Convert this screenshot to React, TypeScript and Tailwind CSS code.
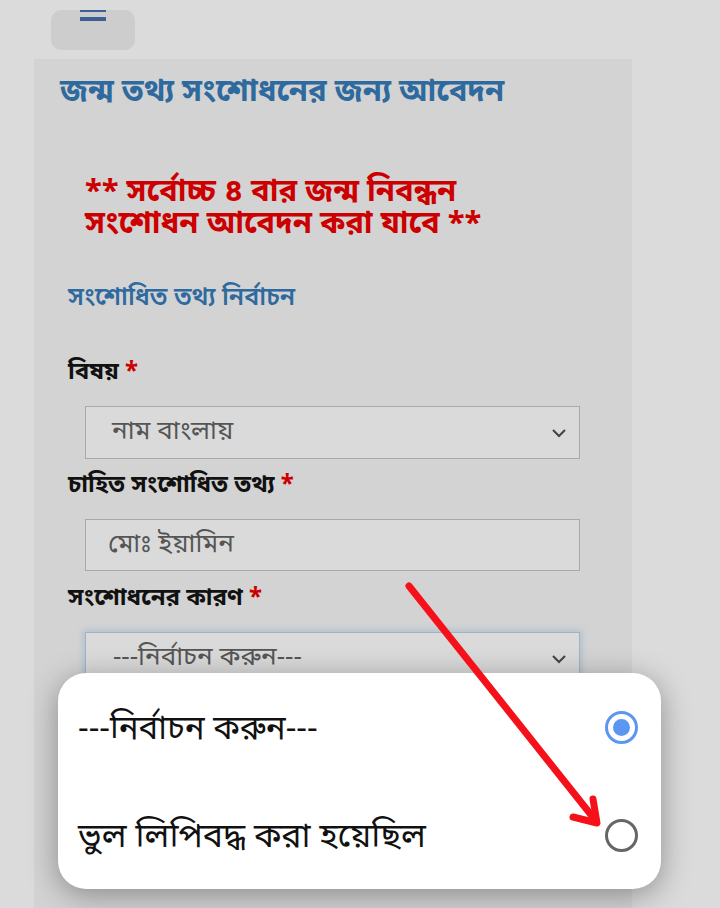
import React from "react";

const bn = { fontFamily: '"Noto Sans Bengali", "Noto Sans", "Liberation Sans", sans-serif' };

function Chevron() {
  return (
    <svg width="16" height="10" viewBox="0 0 16 10" className="shrink-0">
      <path d="M2 2l6 6 6-6" fill="none" stroke="#444" strokeWidth="2" />
    </svg>
  );
}

function Label({ text }: { text: string }) {
  return (
    <div className="text-[24px] leading-[28px] font-bold text-[#111] whitespace-nowrap">
      {text} <span className="text-[#cc0000]">*</span>
    </div>
  );
}

export default function App() {
  return (
    <div className="relative w-[720px] h-[908px] overflow-hidden bg-[#dbdbdb]" style={bn}>
      <div className="ml-[51px] mt-[10px] w-[84px] h-[40px] rounded-[10px] bg-[#cdcdcd] relative">
        <div className="absolute left-[29px] top-0 w-[26px] h-[2px] bg-[#3d5f96]" />
        <div className="absolute left-[29px] top-[7px] w-[26px] h-[4px] bg-[#3d5f96]" />
      </div>

      <div className="ml-[34px] mt-[9px] w-[598px] h-[849px] bg-[#d3d3d3]">
        <div className="pl-[26px] pt-[19px] text-[31px] leading-[32px] font-bold text-[#2e6a9e] whitespace-nowrap">
          জন্ম তথ্য সংশোধনের জন্য আবেদন
        </div>
        <div className="pl-[51px] mt-[68px] text-[31px] leading-[32px] font-bold text-[#cc0000] whitespace-nowrap">
          ** সর্বোচ্চ ৪ বার জন্ম নিবন্ধন
          <br />
          সংশোধন আবেদন করা যাবে **
        </div>
        <div className="pl-[34px] mt-[43px] text-[25px] leading-[28px] font-semibold text-[#2e6a9e] whitespace-nowrap">
          সংশোধিত তথ্য নির্বাচন
        </div>

        <div className="pl-[34px] mt-[46px]">
          <Label text="বিষয়" />
        </div>
        <div className="ml-[51px] mt-[19px] w-[495px] h-[53px] border border-[#a9a9a9] bg-[#dadada] flex items-center justify-between pl-[26px] pr-[12px] text-[26px] text-[#555]">
          <span>নাম বাংলায়</span>
          <Chevron />
        </div>

        <div className="pl-[34px] mt-[13px]">
          <Label text="চাহিত সংশোধিত তথ্য" />
        </div>
        <div className="ml-[51px] mt-[19px] w-[495px] h-[52px] border border-[#a9a9a9] bg-[#dadada] flex items-center pl-[22px] text-[26px] text-[#555]">
          মোঃ ইয়ামিন
        </div>

        <div className="pl-[34px] mt-[14px]">
          <Label text="সংশোধনের কারণ" />
        </div>
        <div className="ml-[51px] mt-[19px] w-[495px] h-[53px] border border-[#9fb4c8] shadow-[0_0_6px_2px_rgba(120,160,200,0.35)] bg-[#dadada] flex items-center justify-between pl-[27px] pr-[12px] text-[26px] text-[#555]">
          <span>---নির্বাচন করুন---</span>
          <Chevron />
        </div>
      </div>

      <div className="absolute left-[58px] top-[673px] w-[603px] h-[216px] rounded-[28px] bg-white shadow-[0_6px_30px_rgba(0,0,0,0.35)] flex flex-col">
        <div className="h-[108px] flex items-center justify-between pl-[20px] pr-[23px]">
          <span className="pt-[8px] text-[33px] text-[#111]">---নির্বাচন করুন---</span>
          <span className="w-[33px] h-[33px] rounded-full border-[3px] border-[#5b97f0] flex items-center justify-center">
            <span className="w-[17px] h-[17px] rounded-full bg-[#5b97f0]" />
          </span>
        </div>
        <div className="h-[108px] flex items-center justify-between pl-[20px] pr-[23px]">
          <span className="pt-[6px] text-[34px] text-[#111]">ভুল লিপিবদ্ধ করা হয়েছিল</span>
          <span className="w-[33px] h-[33px] rounded-full border-[3px] border-[#666]" />
        </div>
      </div>

      <svg className="absolute left-0 top-0 pointer-events-none" width="720" height="908">
        <line x1="409" y1="586" x2="592" y2="816" stroke="#f5101a" strokeWidth="7" strokeLinecap="round" />
        <path d="M573 817 L597 823 L593 799" fill="none" stroke="#f5101a" strokeWidth="7" strokeLinecap="round" strokeLinejoin="round" />
      </svg>
    </div>
  );
}
